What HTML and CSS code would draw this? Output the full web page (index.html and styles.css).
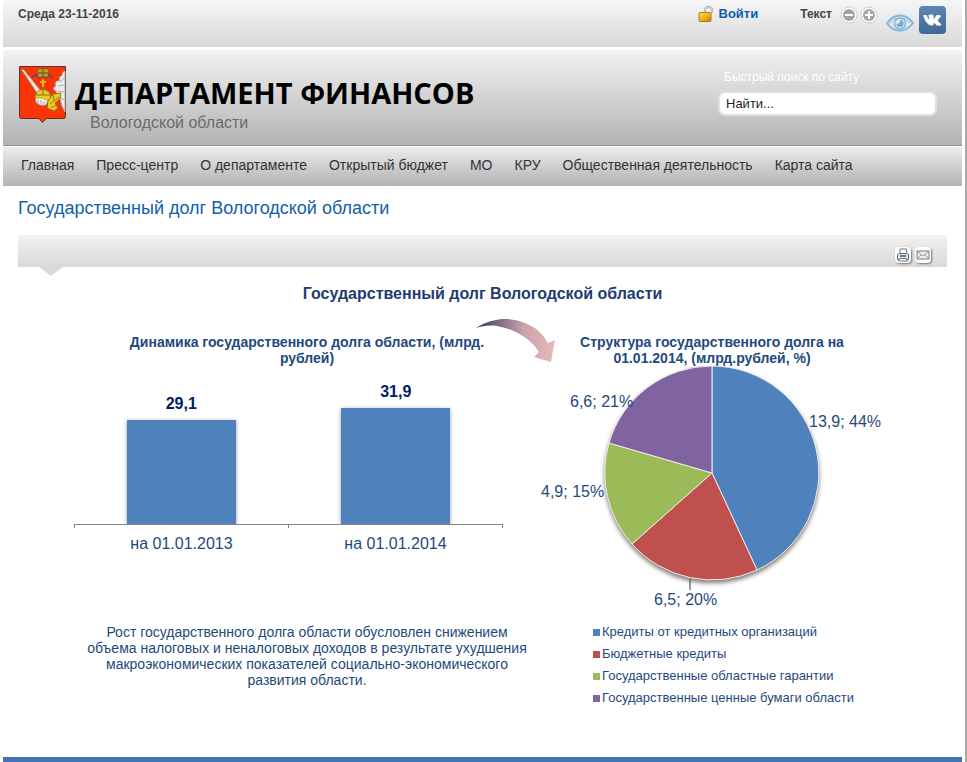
FILE: index.html
```html
<!DOCTYPE html>
<html lang="ru">

<head>
    <meta charset="utf-8">
    <meta name="viewport" content="width=device-width, initial-scale=1.0">
    <title>Департамент финансов Вологодской области</title>
    <link rel="stylesheet" href="styles.css">
</head>
<body>

<div class="page">

    <!-- Top bar -->
    <div class="topbar">
        <span class="date">Среда 23-11-2016</span>
        <a class="login" href="#">
            <svg width="16" height="16" viewBox="0 0 16 16" aria-hidden="true">
                <defs>
                    <linearGradient id="lock" x1="0" y1="0" x2="1" y2="1">
                        <stop offset="0" stop-color="#ffdf70"/>
                        <stop offset="0.5" stop-color="#f3b51c"/>
                        <stop offset="1" stop-color="#c97a08"/>
                    </linearGradient>
                </defs>
                <path d="M7 7V4.500a3.500 3.500 0 0 1 7 0V7" fill="none" stroke="#9a9a9a" stroke-width="2"/>
                <path d="M7 7V4.500a3.500 3.500 0 0 1 7 0V7" fill="none" stroke="#dedede" stroke-width="1"/>
                <rect x="1" y="6.500" width="12" height="9" rx="1" fill="url(#lock)" stroke="#b87b14"/>
            </svg>
            Войти
        </a>
        <div class="text-size">
            <span>Текст</span>
            <button type="button" aria-label="Уменьшить текст">
                <svg width="18" height="18" viewBox="0 0 18 18">
                    <circle cx="9" cy="9" r="8" fill="#fff" stroke="#ccc"/>
                    <circle cx="9" cy="9" r="6" fill="#a3a3a3"/>
                    <path d="M5 9h8" stroke="#fff" stroke-width="2"/>
                </svg>
            </button>
            <button type="button" aria-label="Увеличить текст">
                <svg width="18" height="18" viewBox="0 0 18 18">
                    <circle cx="9" cy="9" r="8" fill="#fff" stroke="#ccc"/>
                    <circle cx="9" cy="9" r="6" fill="#a3a3a3"/>
                    <path d="M5 9h8M9 5v8" stroke="#fff" stroke-width="2"/>
                </svg>
            </button>
        </div>
        <div class="social">
            <a class="eye" href="#" aria-label="Версия для слабовидящих">
                <svg width="28" height="18" viewBox="0 0 28 18" fill="none" stroke="#82b7e0">
                    <path d="M1 9.500C5 3.500 9 1.500 14 1.500S23 3.500 27 9C23 14.500 19 16.500 14 16.500S5 15 1 9.500z" stroke-width="2"/>
                    <path d="M4 9.500C7 5.500 10 4 14 4s7 1.500 10 5" stroke-width="1"/>
                    <circle cx="14" cy="9.500" r="5.500" stroke-width="1.500"/>
                    <path d="M14 6a3.500 3.500 0 1 1-3.500 3.500C12 10.500 14.500 9 14 6z" fill="#6fabdc" stroke="none"/>
                </svg>
            </a>
            <a class="vk" href="#" aria-label="ВКонтакте">
                <svg width="27" height="28" viewBox="0 0 27 28">
                    <defs>
                        <linearGradient id="vk" x1="0" y1="0" x2="0" y2="1">
                            <stop offset="0" stop-color="#5d86b1"/>
                            <stop offset="1" stop-color="#416892"/>
                        </linearGradient>
                    </defs>
                    <rect width="27" height="28" rx="4" fill="url(#vk)"/>
                    <path d="M4.500 9.500h3c.8 2.200 1.800 3.800 2.900 4.600.5-1 .5-3.200-.9-4.300 1.200-1.200 3.500-1.200 4.500-.6.500.3.300 3.600.5 4.700 1.200-.8 2.100-2.600 2.900-4.400h3.900c.9.400-1.500 3-3 4.900.4 1.300 3.200 2.700 3.800 4.600-1 .6-3.300.3-4.400 0-1-.6-2-2.200-2.900-2.400-.7.300-.2 2.100-1 2.500-5.300.6-7.500-4.500-9.300-9.600z" fill="#fff" stroke="#fff" stroke-width="0.700" stroke-linejoin="round"/>
                </svg>
            </a>
        </div>
    </div>

    <!-- Header -->
    <header class="header">
        <a class="logo" href="#">
            <svg class="emblem" width="50" height="60" viewBox="0 0 50 60" aria-hidden="true">
                <path d="M1.500 1.500h46v50q0 2-2 2H28l-3.500 4-3.500-4H3.500q-2 0-2-2z" fill="#fb3407" stroke="#5a3030" stroke-width="1"/>
                <path d="M47 6c-3 1-3 3-3 5-3 0-3 3-2 5-4-1-6 2-4 5-3 1-3 4 0 5 1 5 3 4 4 7s1 6 2 8 2 4 3 6z" fill="#eee" stroke="#aaa"/>
                <path d="M46 13l-4 4M46 20l-6 1M46 27l-6-1M46 35l-4-3" stroke="#999" stroke-width="0.800"/>
                <path d="M3 4l3 1 17 21-4 2z" fill="#e9e9e9" stroke="#9b7770" stroke-width="0.600"/>
                <path d="M14 12l4-2 3 3M27 13l4-3 4 3" fill="none" stroke="#57428b" stroke-width="1.500"/>
                <path d="M19 5c2-2 10-2 12 0l-1 7H20z" fill="#c29a25" stroke="#6b5515" stroke-width="0.700"/>
                <path d="M20 8h10M25 3v9" stroke="#6b5515"/>
                <path d="M25 14v8M22 17h6" stroke="#e0b820" stroke-width="2"/>
                <path d="M17 33a8 8 0 1 1 16-1l-1 5H19z" fill="#efca22" stroke="#947611" stroke-width="0.800"/>
                <path d="M17 30h16M25 22v8" stroke="#8d7215"/>
                <path d="M17 34c3-2 9-1 13 2l-2 4c-4 1-9 0-10-3z" fill="#f0f0f0" stroke="#96854e" stroke-width="0.600"/>
                <path d="M20 35v4M23 35v4M26 36v3" stroke="#777" stroke-width="0.600"/>
                <path d="M30 36l5-7 8-1-1 6-5 4 3 5-4 3-7-3z" fill="#efc91f" stroke="#80640d" stroke-width="0.800"/>
                <path d="M32 39l9-7M33 43l5-3M35 30l1 5" stroke="#80640d" stroke-width="0.800"/>
            </svg>
            <span class="logo-text">
                <span class="logo-title">ДЕПАРТАМЕНТ ФИНАНСОВ</span>
                <span class="logo-sub">Вологодской области</span>
            </span>
        </a>
        <form class="search">
            <label for="search">Быстрый поиск по сайту</label>
            <input type="text" id="search" value="Найти...">
        </form>
    </header>

    <!-- Menu -->
    <nav class="menu">
        <a href="#">Главная</a>
        <a href="#">Пресс-центр</a>
        <a href="#">О департаменте</a>
        <a href="#">Открытый бюджет</a>
        <a href="#">МО</a>
        <a href="#">КРУ</a>
        <a href="#">Общественная деятельность</a>
        <a href="#">Карта сайта</a>
    </nav>

    <!-- Article -->
    <main class="article">
        <h1><a href="#">Государственный долг Вологодской области</a></h1>
        <div class="tools">
            <button type="button" aria-label="Печать">
                <svg width="14" height="14" viewBox="0 0 14 14">
                    <path d="M4 6V1h6.500v5" fill="#fff" stroke="#777"/>
                    <path d="M1.500 6.500l2-1h7l2 1v5h-11z" fill="#e6e6e6" stroke="#666"/>
                    <path d="M4 7h6v2H4z" fill="#3f86d8"/>
                    <path d="M3.500 10.500h7l1 2.500h-9z" fill="#fff" stroke="#777"/>
                </svg>
            </button>
            <button type="button" aria-label="E-mail">
                <svg width="14" height="14" viewBox="0 0 14 14">
                    <rect x="1" y="3" width="12" height="8" fill="#eef2f6" stroke="#777"/>
                    <path d="M1.500 3.500L7 8l5.500-4.500M1.500 10.500L5 7M12.500 10.500L9 7" fill="none" stroke="#8a99a8"/>
                </svg>
            </button>
        </div>

        <section class="report">
            <h2>Государственный долг Вологодской области</h2>
            <svg class="arrow" width="82" height="46" viewBox="0 0 82 46" aria-hidden="true">
                <defs>
                    <linearGradient id="arrow" x1="0" y1="0" x2="1" y2="0">
                        <stop offset="0" stop-color="#34355c"/>
                        <stop offset="0.200" stop-color="#65597a"/>
                        <stop offset="0.600" stop-color="#c9a2a9"/>
                        <stop offset="1" stop-color="#e8babb"/>
                    </linearGradient>
                </defs>
                <path d="M1 10C22-3 43 0 56 8c8 4 13 10 17 17l7-3-4 22-17-5 5-5C57 22 40 11 22 8 14 7 7 8 1 10z" fill="url(#arrow)"/>
            </svg>

            <div class="charts">
                <!-- Bar chart -->
                <div class="dynamics">
                    <h3>Динамика государственного долга области, (млрд. рублей)</h3>
                    <div class="bars">
                        <div class="bar-cell">
                            <span class="bar-value">29,1</span>
                            <div class="bar" style="height: 104px"></div>
                        </div>
                        <div class="bar-cell">
                            <span class="bar-value">31,9</span>
                            <div class="bar" style="height: 116px"></div>
                        </div>
                    </div>
                    <div class="bar-labels">
                        <span>на 01.01.2013</span>
                        <span>на 01.01.2014</span>
                    </div>
                    <p>Рост государственного долга области обусловлен снижением объема налоговых и неналоговых доходов в результате ухудшения макроэкономических показателей социально-экономического развития области.</p>
                </div>

                <!-- Pie chart -->
                <div class="structure">
                    <h3>Структура государственного долга на 01.01.2014, (млрд.рублей, %)</h3>
                    <svg class="pie" viewBox="0 0 344 248">
                        <g class="slices">
                            <path d="M172 109V2A107 107 0 0 1 217 206z" fill="#4f81bd"/>
                            <path d="M172 109L217 206A107 107 0 0 1 92 180z" fill="#c0504d"/>
                            <path d="M172 109L92 180A107 107 0 0 1 69 79z" fill="#9bbb59"/>
                            <path d="M172 109L69 79A107 107 0 0 1 172 2z" fill="#8064a2"/>
                        </g>
                        <path d="M150 215v11" stroke="#333"/>
                        <text x="269" y="63">13,9; 44%</text>
                        <text x="30" y="43">6,6; 21%</text>
                        <text x="1" y="133">4,9; 15%</text>
                        <text x="114" y="241">6,5; 20%</text>
                    </svg>
                    <ul class="legend">
                        <li class="credit">Кредиты от кредитных организаций</li>
                        <li class="budget">Бюджетные кредиты</li>
                        <li class="guarantee">Государственные областные гарантии</li>
                        <li class="bonds">Государственные ценные бумаги области</li>
                    </ul>
                </div>
            </div>
        </section>
    </main>

    <footer class="footer"></footer>
</div>

</body>

</html>
```
FILE: styles.css
```css
/* General */
* {
    box-sizing: border-box;
}

body {
    margin: 0;
    padding: 0 3px;
    background-color: white;
    border-right: 2px solid #a9a9a9;
    font-family: "Liberation Sans", Arial, sans-serif;
    font-size: 14px;
    color: #444;
}

.page {
    display: flex;
    flex-direction: column;
    min-height: 100vh;
}

a {
    color: inherit;
    text-decoration: none;
}

svg {
    display: block;
}

button {
    padding: 0;
    border: none;
    background: none;
    cursor: pointer;
}

/* Top bar */
.topbar {
    display: flex;
    align-items: flex-start;
    height: 47px;
    padding: 6px 16px 0 15px;
    background: linear-gradient(#f6f6f6, #d8d8d8);
    font-size: 12px;
    font-weight: bold;
    line-height: 16px;
}

.date {
    margin-right: auto;
}

.login {
    display: flex;
    gap: 5px;
    margin-right: 42px;
    font-size: 13px;
    color: #135cae;
}

.text-size {
    display: flex;
    gap: 2px;
    margin-right: 8px;
}

.text-size span {
    margin-right: 6px;
}

.social {
    display: flex;
    gap: 5px;
}

.eye {
    padding-top: 8px;
}

/* Header */
.header {
    display: flex;
    justify-content: space-between;
    height: 96px;
    margin-top: 3px;
    padding: 15px 25px 0 15px;
    background: linear-gradient(#f2f2f2, #b3b3b3);
    border-bottom: 1px solid #8f8f8f;
}

.logo {
    display: flex;
    gap: 7px;
}

.logo-text {
    display: flex;
    flex-direction: column;
    padding-top: 7px;
}

.logo-title {
    font-family: "Open Sans", "Noto Sans", sans-serif;
    font-size: 29px;
    font-weight: bold;
    line-height: 41px;
    color: black;
}

.logo-sub {
    padding-left: 15px;
    font-size: 16px;
    line-height: 20px;
    color: #6b6b6b;
}

.search {
    display: flex;
    flex-direction: column;
    gap: 6px;
    width: 219px;
    padding-top: 4px;
}

.search label {
    padding-left: 6px;
    font-size: 12px;
    line-height: 16px;
    color: white;
}

.search input {
    height: 25px;
    padding: 0 6px;
    border: 2px solid #e0e0e0;
    border-radius: 7px;
    background-color: white;
    font-family: inherit;
    font-size: 13px;
    color: #222;
}

/* Menu */
.menu {
    display: flex;
    gap: 22px;
    margin-top: 1px;
    padding: 0 18px 2px;
    background: linear-gradient(#ececec, #b2b2b2);
    line-height: 37px;
    color: #333;
}

/* Article */
.article {
    flex: 1;
    padding: 12px 15px 0;
}

h1 {
    margin: 0 0 17px;
    font-size: 18px;
    font-weight: normal;
    line-height: 20px;
    color: #135fa9;
}

.tools {
    position: relative;
    display: flex;
    justify-content: flex-end;
    gap: 4px;
    height: 32px;
    padding: 12px 16px 0 0;
    background: linear-gradient(#f2f2f2, #d9d9d9);
}

.tools::after {
    content: "";
    position: absolute;
    top: 100%;
    left: 21px;
    border: 12px solid transparent;
    border-top: 9px solid #d9d9d9;
    border-bottom: none;
}

.tools button {
    width: 16px;
    height: 16px;
    padding: 1px;
    border-radius: 4px;
    background-color: white;
    box-shadow: 1px 1px 2px #777;
}

/* Report */
.report {
    position: relative;
    padding-top: 17px;
    color: #1f497d;
}

h2 {
    margin: 0 0 30px;
    font-size: 16px;
    line-height: 20px;
    text-align: center;
    color: #1f3c72;
}

h3 {
    margin: 0 auto;
    font-size: 14px;
    line-height: 16px;
    text-align: center;
}

.arrow {
    position: absolute;
    top: 51px;
    left: 457px;
}

.charts {
    display: grid;
    grid-template-columns: 466fr 344fr;
    padding: 0 63px 0 56px;
}

.dynamics h3 {
    max-width: 370px;
}

.structure h3 {
    max-width: 290px;
}

/* Bars */
.bars {
    display: flex;
    align-items: flex-end;
    height: 159px;
    margin-right: 37px;
    border-bottom: 1px solid #868686;
}

.bar-cell {
    display: flex;
    flex: 1;
    flex-direction: column;
    align-items: center;
    gap: 6px;
}

.bar-value {
    font-size: 16px;
    font-weight: bold;
    line-height: 20px;
    color: #002060;
}

.bar {
    width: 51%;
    background-color: #4f81bd;
    box-shadow: 0 1px 4px rgba(0, 0, 0, 0.4);
    clip-path: inset(-6px -6px 0);
}

.bar-labels {
    display: flex;
    margin-right: 37px;
    border-right: 1px solid #868686;
    border-image: linear-gradient(#868686 4px, transparent 4px) 1;
}

.bar-labels span {
    flex: 1;
    padding-top: 9px;
    border-left: 1px solid;
    border-image: linear-gradient(#868686 4px, transparent 4px) 1;
    font-size: 16px;
    line-height: 20px;
    text-align: center;
}

.dynamics p {
    max-width: 440px;
    margin: 70px auto 0;
    line-height: 16px;
    text-align: center;
}

/* Pie */
.pie {
    width: 100%;
    margin-top: -2px;
    font-size: 16px;
    fill: #1f497d;
}

.slices {
    stroke: #eee;
    stroke-width: 1px;
    filter: drop-shadow(0 3px 2px rgba(60, 40, 30, 0.6));
}

.legend {
    margin: 9px 0 0;
    padding: 0 0 0 53px;
    list-style: none;
    font-size: 13px;
    line-height: 22px;
}

.legend li {
    display: flex;
    align-items: center;
    gap: 2px;
}

.legend li::before {
    content: "";
    width: 7px;
    height: 7px;
    background-color: #4f81bd;
}

.legend .budget::before {
    background-color: #c0504d;
}

.legend .guarantee::before {
    background-color: #9bbb59;
}

.legend .bonds::before {
    background-color: #8064a2;
}

/* Footer */
.footer {
    height: 5px;
    background-color: #4472b4;
}
```
